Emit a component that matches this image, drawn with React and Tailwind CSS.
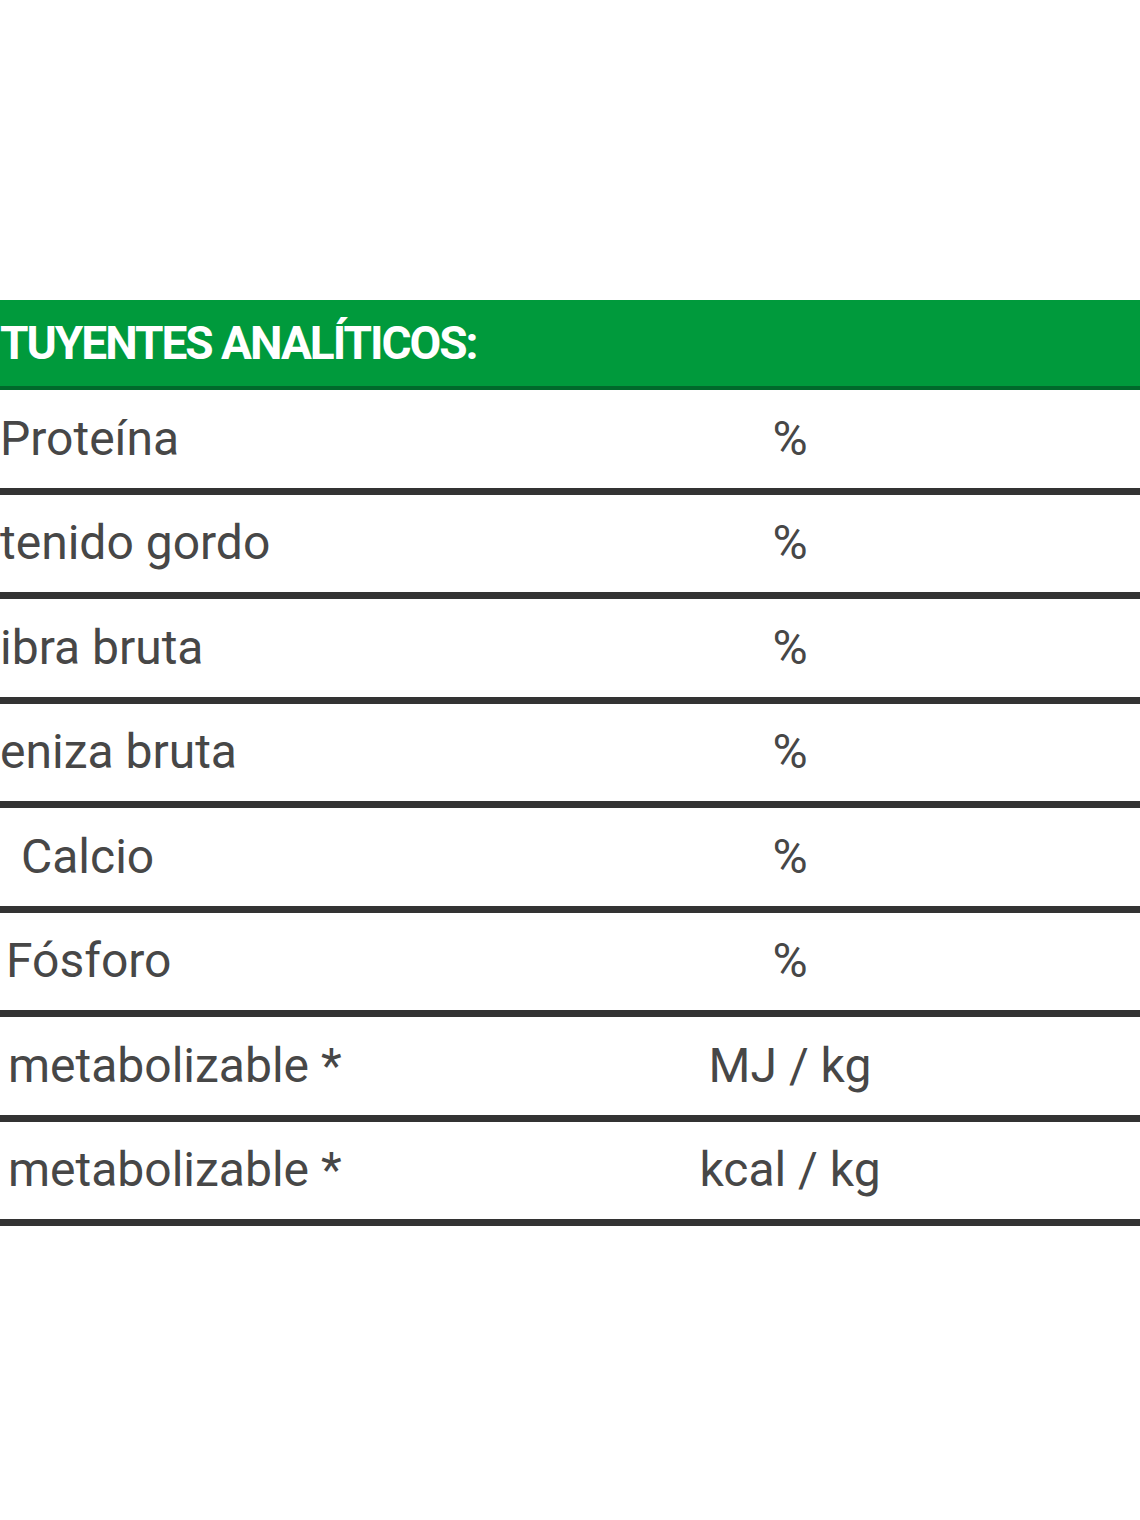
import React from "react";

const rows = [
  { label: "Proteína", unit: "%", pad: "pl-0" },
  { label: "tenido gordo", unit: "%", pad: "pl-0" },
  { label: "ibra bruta", unit: "%", pad: "pl-0" },
  { label: "eniza bruta", unit: "%", pad: "pl-0" },
  { label: "Calcio", unit: "%", pad: "pl-[21px]" },
  { label: "Fósforo", unit: "%", pad: "pl-[6px]" },
  { label: "metabolizable *", unit: "MJ / kg", pad: "pl-[8px]" },
  { label: "metabolizable *", unit: "kcal / kg", pad: "pl-[8px]" },
];

export default function App() {
  return (
    <div className="w-[1140px] h-[1520px] bg-white overflow-hidden font-['Roboto','Liberation_Sans',sans-serif]">
      <div className="pt-[300px]">
        {/* cabecera verde */}
        <div className="h-[90px] bg-[#009a3c] border-b-4 border-[#00692b] flex items-center">
          <span className="text-white font-bold text-[46px] tracking-[-2px] leading-none">
            TUYENTES ANALÍTICOS:
          </span>
        </div>

        {rows.map((r, i) => (
          <div
            key={i}
            className="h-[104.5px] border-b-[7px] border-[#333333] flex items-center text-[48px] text-[#474747] leading-none"
          >
            <div className={`w-[580px] ${r.pad}`}>{r.label}</div>
            <div className="w-[420px] text-center">{r.unit}</div>
          </div>
        ))}
      </div>
    </div>
  );
}
